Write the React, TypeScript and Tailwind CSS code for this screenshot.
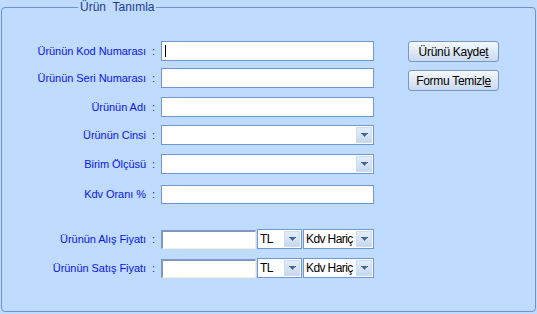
import React from "react";

// small dropdown arrow used by the combo boxes
function Arrow() {
  return (
    <svg width="7" height="5" viewBox="0 0 7 5">
      <rect x="0" y="0" width="7" height="1" fill="#3f6298" />
      <polygon points="1,1 6,1 3.5,4" fill="#3f6298" />
    </svg>
  );
}

function Combo({ value, className }: { value?: string; className: string }) {
  return (
    <div className={`flex bg-white border border-[#6f97d0] ${className}`}>
      <div className="flex-1 min-w-0 overflow-hidden whitespace-nowrap pl-[2px] flex items-center text-[12px] tracking-[-0.6px] text-black leading-none">
        {value}
      </div>
      <div className="w-[16px] shrink-0 my-[1px] mr-[1px] border border-[#cfdcee] bg-gradient-to-b from-[#e3ecf8] via-[#d7e4f5] to-[#c5d7ef] flex items-center justify-center">
        <Arrow />
      </div>
    </div>
  );
}

function Label({ text }: { text: string }) {
  return (
    <div className="w-[153px] shrink-0 text-right text-[11px] tracking-[-0.05px] text-[#0a14f0] whitespace-pre leading-none">
      {text}
    </div>
  );
}

export default function App() {
  return (
    <div
      className="w-[537px] h-[314px] bg-[#bfdbff] overflow-hidden"
      style={{ fontFamily: '"Liberation Sans", Arial, sans-serif' }}
    >
      <fieldset className="ml-[1px] w-[535px] h-[312px] border border-[#6b94cf] rounded-[4px]">
        <legend className="ml-[76px] px-[2px] text-[12px] leading-[15px] text-[#1d3c8c] whitespace-pre">
          Ürün  Tanımla
        </legend>

        <div className="flex pt-[26px]">
          <div className="flex flex-col">
            <div className="flex items-center h-[20px]">
              <Label text="Ürünün Kod Numarası  :" />
              <div className="ml-[6px] w-[213px] h-[20px] bg-white border border-[#6f97d0] flex items-center pl-[3px]">
                <div className="w-[1px] h-[12px] bg-black" />
              </div>
            </div>
            <div className="flex items-center h-[20px] mt-[7px]">
              <Label text="Ürünün Seri Numarası  :" />
              <div className="ml-[6px] w-[213px] h-[20px] bg-white border border-[#6f97d0]" />
            </div>
            <div className="flex items-center h-[20px] mt-[9px]">
              <Label text="Ürünün Adı  :" />
              <div className="ml-[6px] w-[213px] h-[20px] bg-white border border-[#6f97d0]" />
            </div>
            <div className="flex items-center h-[20px] mt-[8px]">
              <Label text="Ürünün Cinsi  :" />
              <Combo className="ml-[6px] w-[213px] h-[20px]" />
            </div>
            <div className="flex items-center h-[20px] mt-[9px]">
              <Label text="Birim Ölçüsü  :" />
              <Combo className="ml-[6px] w-[213px] h-[20px]" />
            </div>
            <div className="flex items-center h-[20px] mt-[10px]">
              <Label text="Kdv Oranı %  :" />
              <div className="ml-[6px] w-[213px] h-[19px] bg-white border border-[#6f97d0]" />
            </div>

            <div className="flex items-center h-[20px] mt-[25px]">
              <Label text="Ürünün Alış Fiyatı  :" />
              <div className="ml-[6px] w-[95px] h-[19px] bg-white border-t-2 border-l-2 border-r border-b border-t-[#7f98c0] border-l-[#7f98c0] border-r-[#f2eee0] border-b-[#f2eee0]" />
              <Combo value="TL" className="ml-[1px] w-[45px] h-[20px]" />
              <Combo value="Kdv Hariç" className="ml-[1px] w-[71px] h-[20px]" />
            </div>
            <div className="flex items-center h-[20px] mt-[9px]">
              <Label text="Ürünün Satış Fiyatı  :" />
              <div className="ml-[6px] w-[95px] h-[19px] bg-white border-t-2 border-l-2 border-r border-b border-t-[#7f98c0] border-l-[#7f98c0] border-r-[#f2eee0] border-b-[#f2eee0]" />
              <Combo value="TL" className="ml-[1px] w-[45px] h-[20px]" />
              <Combo value="Kdv Hariç" className="ml-[1px] w-[71px] h-[20px]" />
            </div>
          </div>

          <div className="ml-[34px] flex flex-col gap-[8px]">
            <button className="w-[91px] h-[21px] border border-[#7897c2] rounded-[3px] bg-gradient-to-b from-[#f6f9fd] to-[#c9d9ee] text-[12px] tracking-[-0.3px] text-black leading-none">
              Ürünü Kayde<span className="underline">t</span>
            </button>
            <button className="w-[91px] h-[21px] border border-[#7897c2] rounded-[3px] bg-gradient-to-b from-[#f6f9fd] to-[#c9d9ee] text-[12px] tracking-[-0.3px] text-black leading-none">
              Formu Temizl<span className="underline">e</span>
            </button>
          </div>
        </div>
      </fieldset>
    </div>
  );
}
